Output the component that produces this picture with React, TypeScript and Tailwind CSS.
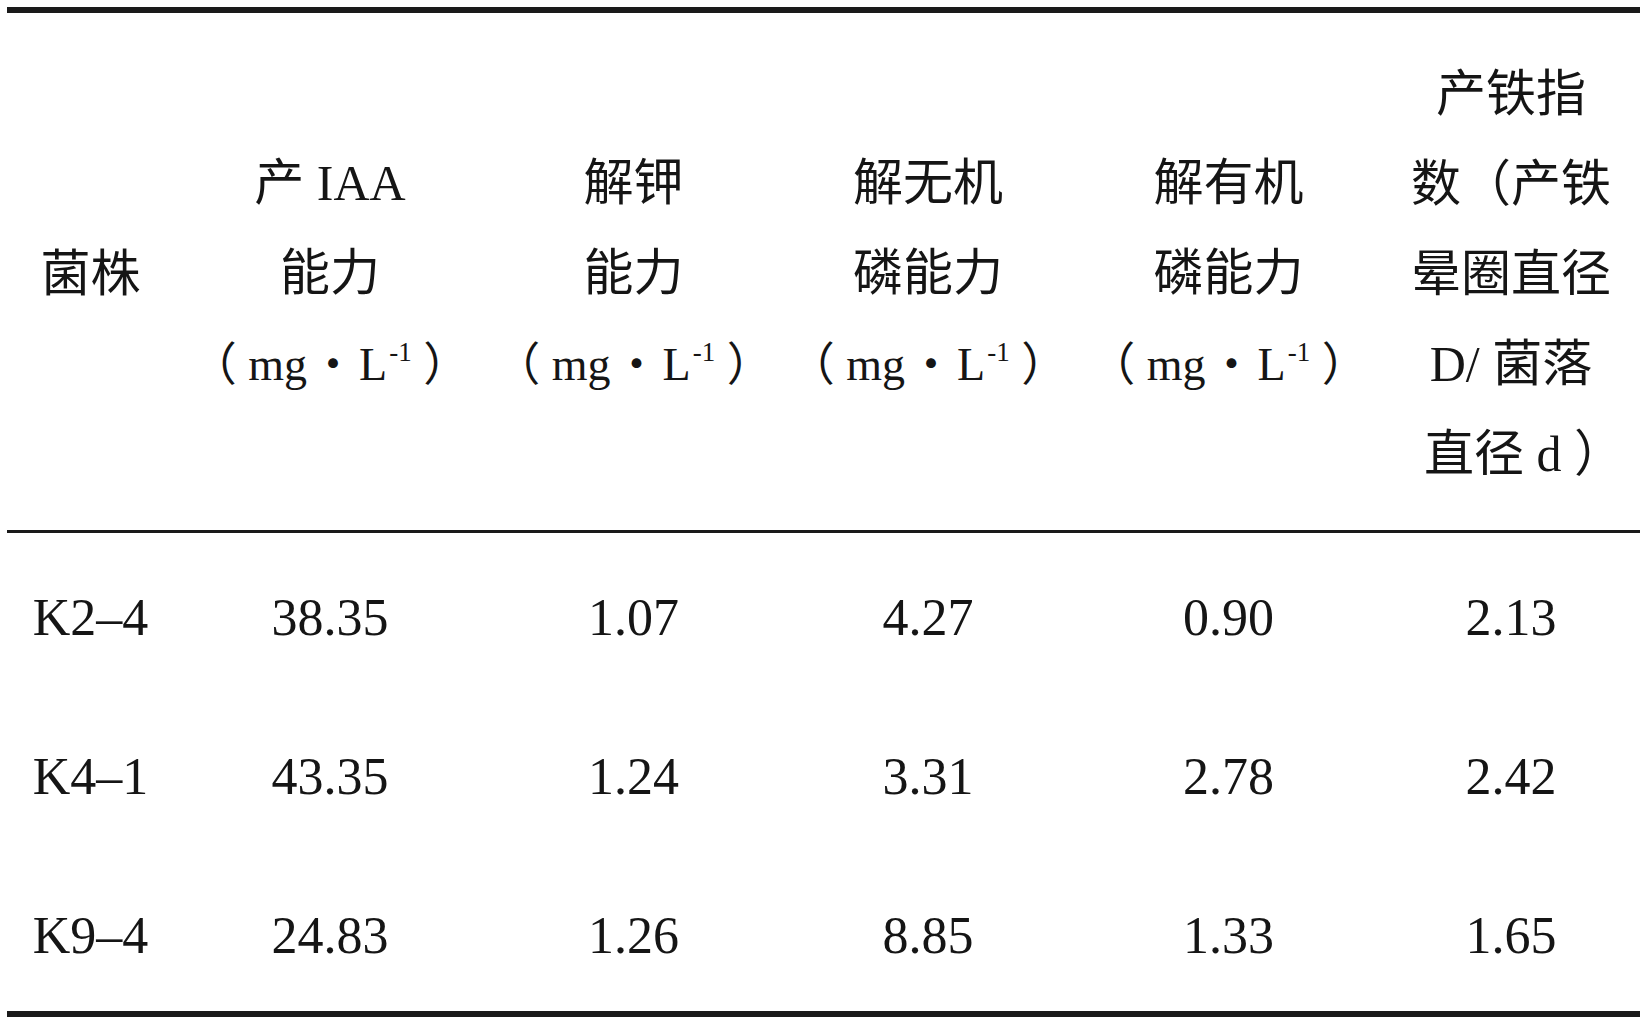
import React from "react";

const unit = (
  <span className="text-[46px]">
    （ mg<span className="mx-[3px]">・</span>L<sup className="text-[27px] relative -top-[19px] align-baseline ml-[2px]">-1</sup> ）
  </span>
);

const headers: React.ReactNode[][] = [
  ["菌株"],
  ["产 IAA", "能力", unit],
  ["解钾", "能力", unit],
  ["解无机", "磷能力", unit],
  ["解有机", "磷能力", unit],
  ["产铁指", "数（产铁", "晕圈直径", "D/ 菌落", <span className="pl-[26px]">直径 d ）</span>],
];

const rows = [
  ["K2–4", "38.35", "1.07", "4.27", "0.90", "2.13"],
  ["K4–1", "43.35", "1.24", "3.31", "2.78", "2.42"],
  ["K9–4", "24.83", "1.26", "8.85", "1.33", "1.65"],
];

const cols = "grid grid-cols-[167px_312px_295px_294px_307px_258px]";

export default function App() {
  return (
    <div className="min-h-screen w-full bg-white pt-[7px] pl-[7px] text-[#151515] font-['Liberation_Serif','Noto_Sans_CJK_SC',serif]">
      <div className="w-[1633px] border-t-[6px] border-b-[6px] border-[#1a1a1a]">
        {/* header */}
        <div className={`${cols} h-[520px] border-b-[3px] border-[#1a1a1a]`}>
          {headers.map((lines, i) => (
            <div key={i} className="flex flex-col items-center justify-center pt-[4px] text-[50px] leading-[90px]">
              {lines.map((l, j) => (
                <div key={j} className="whitespace-nowrap">
                  {l}
                </div>
              ))}
            </div>
          ))}
        </div>

        {/* body */}
        <div className="flex flex-col h-[478px]">
          {rows.map((r, i) => (
            <div key={i} className={`${cols} flex-1`}>
              {r.map((c, j) => (
                <div key={j} className="flex items-center justify-center pt-[10px] text-[52px] leading-none">
                  {c}
                </div>
              ))}
            </div>
          ))}
        </div>
      </div>
    </div>
  );
}
